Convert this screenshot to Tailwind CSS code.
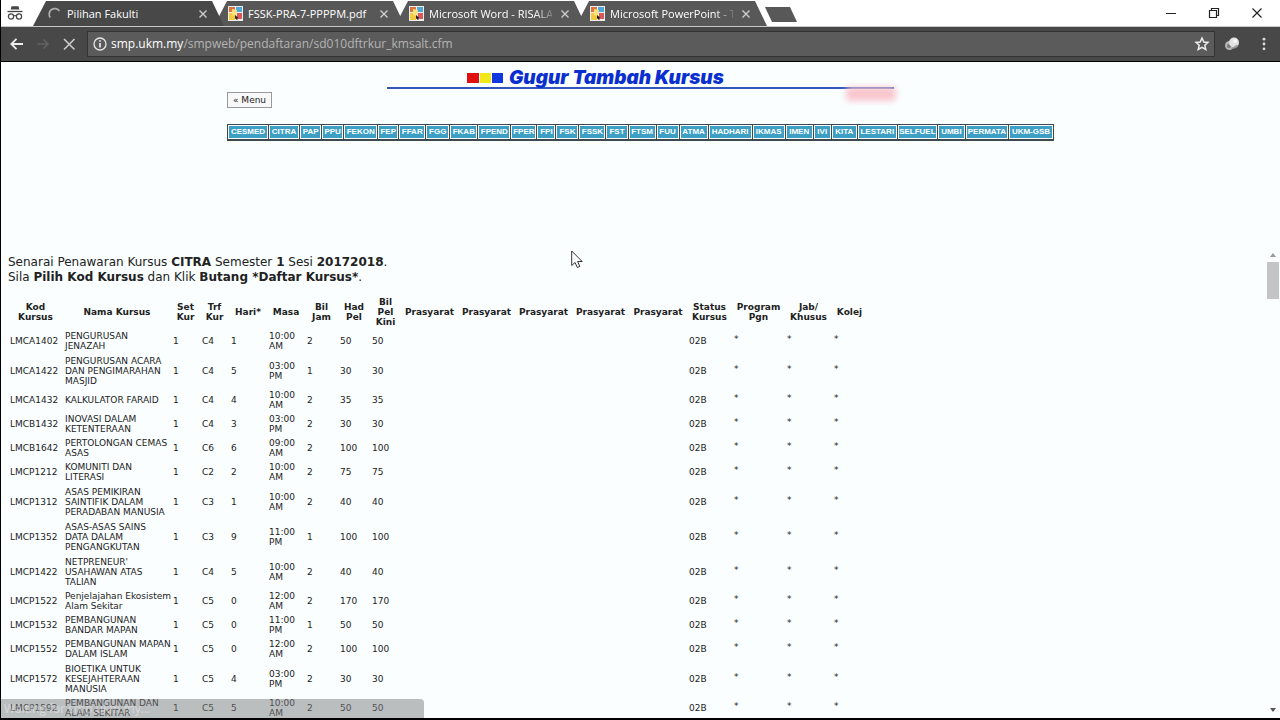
<!DOCTYPE html>
<html lang="ms">
<head>
<meta charset="utf-8">
<title>Pilihan Fakulti</title>
<script src="https://cdn.jsdelivr.net/npm/@tailwindcss/browser@4"></script>
</head>
<body class="flex h-screen flex-col overflow-hidden border-b-2 border-l border-black bg-[#fafeff] font-['DejaVu_Sans',sans-serif] text-[#222]">

<!-- Browser chrome -->
<header class="shrink-0 border-b border-black bg-[#484848] font-['Open_Sans','Noto_Sans',sans-serif] text-white">
  <div class="flex h-[27px] items-stretch border-b border-[#c8c8c8] bg-white">
    <div class="flex w-8 items-center pl-[6px]">
      <svg class="h-4 w-4 text-[#444]" viewBox="0 0 16 16" fill="none" stroke="currentColor" aria-label="Incognito"><path d="M4.5 1.2h7l.8 3.3h-8.600z" fill="currentColor" stroke="none"/><path d="M.5 6.500h15" stroke-width="1.300"/><circle cx="4" cy="11.500" r="2.600" stroke-width="1.200"/><circle cx="12" cy="11.500" r="2.600" stroke-width="1.200"/><path d="M6.600 11q1.400-1 2.800 0" stroke-width="1.200"/></svg>
    </div>
    <nav id="tabs" class="flex items-stretch pt-px"></nav>
    <button aria-label="New tab" class="-ml-0.5 mt-[7px] h-[15px] w-[32px] bg-[#585858] [clip-path:polygon(0_0,25px_0,100%_100%,7px_100%)]"></button>
    <div class="ml-auto flex items-center gap-[27px] pr-[15px] text-[#222]">
      <button aria-label="Minimize"><svg class="h-4 w-4" viewBox="0 0 16 16" stroke="currentColor"><path d="M3 8.500h10"/></svg></button>
      <button aria-label="Restore"><svg class="h-4 w-4" viewBox="0 0 16 16" fill="none" stroke="currentColor" stroke-width="1.200"><path d="M3.500 5.500h7v7h-7zM5.500 5.500v-2h7v7h-2"/></svg></button>
      <button aria-label="Close"><svg class="h-4 w-4" viewBox="0 0 16 16" stroke="currentColor" stroke-width="1.200"><path d="M3.500 3.500l9 9m0-9l-9 9"/></svg></button>
    </div>
  </div>
  <div class="flex h-[34px] items-center pr-2">
    <div class="flex w-[86px] items-center gap-[10px] pl-2">
      <button aria-label="Back"><svg class="h-4 w-4" viewBox="0 0 16 16" fill="none" stroke="#eee" stroke-width="1.800"><path d="M14 8H2.500M7.500 2.800L2.300 8l5.200 5.200"/></svg></button>
      <button aria-label="Forward"><svg class="h-4 w-4" viewBox="0 0 16 16" fill="none" stroke="#626262" stroke-width="1.600"><path d="M2.500 8H13M8.500 3.500L13 8l-4.500 4.500"/></svg></button>
      <button aria-label="Stop"><svg class="h-4 w-4" viewBox="0 0 16 16" stroke="#ccc" stroke-width="1.600"><path d="M3 3l10.500 10.500m0-10.500L3 13.500"/></svg></button>
    </div>
    <div class="flex h-[26px] flex-1 items-center border border-[#333] bg-[#5b5b5b] px-1">
      <svg class="h-4 w-4 shrink-0" viewBox="0 0 16 16" fill="none" stroke="#e8e8e8" stroke-width="1.300"><circle cx="8" cy="8" r="6"/><path d="M8 7v4.500M8 4.200v1.600" stroke-width="1.700"/></svg>
      <a href="#" class="ml-[3px] flex-1 text-[12px] leading-4 text-[#b4b4b4]"><span class="font-medium text-white">smp.ukm.my</span>/smpweb/pendaftaran/sd010dftrkur_kmsalt.cfm</a>
      <button aria-label="Bookmark"><svg class="h-4 w-4" viewBox="0 0 16 16" fill="none" stroke="#eee" stroke-width="1.500"><path d="M8 2l1.800 4 4.200.400-3.200 2.900 1 4.200L8 11.300l-3.800 2.200 1-4.200L2 6.400 6.200 6z"/></svg></button>
    </div>
    <div class="flex items-center gap-4 pl-[9px]">
      <button aria-label="Extension"><svg class="h-4 w-4" viewBox="0 0 16 16"><circle cx="5.500" cy="9.500" r="4.500" fill="#b5b5b5"/><circle cx="5" cy="10" r="2" fill="#777"/><circle cx="10" cy="6.500" r="5" fill="#e2e2e2"/><circle cx="11" cy="5" r="2" fill="#f6f6f6"/><path d="M7 12.500q5 1 7.500-3l-2-.5z" fill="#999"/></svg></button>
      <button aria-label="Menu"><svg class="h-4 w-4" viewBox="0 0 16 16" fill="#ddd"><circle cx="8" cy="3.200" r="1.400"/><circle cx="8" cy="8" r="1.400"/><circle cx="8" cy="12.800" r="1.400"/></svg></button>
    </div>
  </div>
</header>

<!-- Top frame: banner and faculty menu -->
<section class="h-[187px] shrink-0 pt-[6px]">
  <div class="relative mx-auto w-[507px] border-b-2 border-[#3355bb]">
    <div class="flex h-[19px] items-center pl-[80px]">
      <span class="flex gap-px pt-px"><i class="h-[10px] w-[12px] bg-[#e01010]"></i><i class="h-[10px] w-[11px] bg-[#f0e818]"></i><i class="h-[10px] w-[11px] bg-[#1038e0]"></i></span>
      <h1 class="ml-[6px] whitespace-nowrap font-['Inter',sans-serif] text-[19px] leading-5 font-black italic text-[#0a2fd0]">Gugur Tambah Kursus</h1>
    </div>
    <div class="absolute -right-[2px] -bottom-[14px] h-[14px] w-[50px] rounded bg-[#f9c6cd] blur-[3px]"></div>
  </div>
  <div class="mx-auto w-[827px]">
    <button class="mt-[3px] block h-[16px] border border-[#999] bg-[#f8f8f8] px-[5px] text-[9px] leading-[14px]">« Menu</button>
    <nav id="faculties" class="mt-4 flex h-[17px] border border-b-2 border-[#3c4a50] bg-[#3c4a50]"></nav>
  </div>
</section>

<!-- Lower frame: course list -->
<main class="relative flex min-h-0 flex-1 overflow-hidden">
  <div class="min-w-0 flex-1 pt-[6px] pl-[7px]">
    <p class="text-[12px] leading-[15px]">Senarai Penawaran Kursus <b>CITRA</b> Semester <b>1</b> Sesi <b>20172018</b>.<br>Sila <b>Pilih Kod Kursus</b> dan Klik <b>Butang *Daftar Kursus*</b>.</p>
    <table class="mt-[9px] w-[859px] table-fixed text-[9px] leading-[10px]">
      <colgroup id="cols"></colgroup>
      <thead><tr class="h-[35px]">
        <th>Kod<br>Kursus</th><th>Nama Kursus</th><th>Set<br>Kur</th><th>Trf<br>Kur</th><th>Hari*</th><th>Masa</th><th>Bil<br>Jam</th><th>Had<br>Pel</th><th>Bil<br>Pel<br>Kini</th><th>Prasyarat</th><th>Prasyarat</th><th>Prasyarat</th><th>Prasyarat</th><th>Prasyarat</th><th>Status<br>Kursus</th><th>Program<br>Pgn</th><th>Jab/<br>Khusus</th><th>Kolej</th>
      </tr></thead>
      <tbody id="rows"></tbody>
    </table>
  </div>
  <div class="flex w-[15px] shrink-0 flex-col items-center pt-[4px] pb-[6px]">
    <i class="h-0 w-0 border-x-[3px] border-b-4 border-x-transparent border-b-[#999]"></i>
    <i class="mt-[5px] h-[37px] w-[12px] bg-[#c4c4c4]"></i>
    <i class="mt-auto h-0 w-0 border-x-[3px] border-t-4 border-x-transparent border-t-[#555]"></i>
  </div>
  <div class="absolute bottom-0 left-0 h-[19px] w-[423px] rounded-tr bg-[#7c7e80]/50 pl-[3px] font-['Open_Sans',sans-serif] text-[12px] leading-[19px] text-white/40">Waiting for smp.ukm.my...</div>
</main>

<!-- Mouse pointer -->
<svg class="absolute top-[250px] left-[571px] h-[19px] w-[12px]" viewBox="0 0 12 19"><path d="M.7 1v14.500l3.400-3 2.200 5 2.500-1.100-2.200-4.900h4.600z" fill="#fff" stroke="#333"/></svg>

<script>
const spinner = '<svg class="h-[14px] w-[14px]" viewBox="0 0 14 14" fill="none" stroke="#aaa" stroke-width="1.800"><path d="M2.200 10.500A5.500 5.500 0 0 1 11.500 4"/></svg>';
const favicon = '<svg class="h-[15px] w-[15px]" viewBox="0 0 15 15"><path fill="#eee" d="M0 0h15v15H0z"/><path fill="#e0703c" d="M1 1h6v5H1z"/><path fill="#4fa9d8" d="M8 1h6v5H8z"/><path fill="#f3cb3e" d="M1 7h6v7H1z"/><path fill="#d9585a" d="M9 7h5v6H9z"/><path fill="#fbe27c" d="M4 3l5 1-1 6-4-1z"/><path fill="#222" d="M7 9l3.500 3-1.500.2.700 1.500-1 .4-.8-1.500L7 13z"/></svg>';
const close = '<button aria-label="Close tab" class="ml-auto"><svg class="h-[10px] w-[10px]" viewBox="0 0 10 10" stroke="#ccc" stroke-width="1.400"><path d="M1.500 1.500l7 7m0-7l-7 7"/></svg></button>';
const plain = 'ml-[5px] w-[123px] overflow-hidden whitespace-nowrap text-[11px] leading-4';
const fade = 'ml-[5px] w-[123px] overflow-hidden whitespace-nowrap text-[11px] leading-4 [mask-image:linear-gradient(90deg,#000_105px,transparent_128px)]';
const active = 'relative z-10 flex w-[191px] items-center bg-[#484848] pr-[16px] pl-[15px] [clip-path:polygon(0_100%,13px_0,calc(100%-12px)_0,100%_100%)]';
const idle = '-ml-[10px] flex w-[191px] items-center bg-[#585858] pr-[16px] pl-[14px] [clip-path:polygon(0_100%,13px_0,calc(100%-12px)_0,100%_100%)]';
document.getElementById('tabs').innerHTML = ['Pilihan Fakulti','FSSK-PRA-7-PPPPM.pdf','Microsoft Word - RISALA','Microsoft PowerPoint - TA']
  .map((t,i) => `<div class="${i ? idle : active}">${i ? favicon : spinner}<span class="${i > 1 ? fade : plain}">${t}</span>${close}</div>`).join('');

const faculties = [['CESMED',41],['CITRA',31],['PAP',22],['PPU',22],['FEKON',34],['FEP',21],['FFAR',27],['FGG',24],['FKAB',28],['FPEND',33],['FPER',26],['FPI',19],['FSK',23],['FSSK',27],['FST',22],['FTSM',28],['FUU',23],['ATMA',29],['HADHARI',44],['IKMAS',33],['IMEN',28],['IVI',18],['KITA',26],['LESTARI',40],['SELFUEL',40],['UMBI',28],['PERMATA',43],['UKM-GSB',45]];
document.getElementById('faculties').innerHTML = faculties
  .map(([n,w]) => `<a href="#" class="mr-px flex min-w-0 items-center justify-center border border-white bg-[#3d9fc4] font-['Liberation_Sans',sans-serif] text-[8px] leading-none font-bold text-white last:mr-0" style="flex:${w - 3} 1 2px">${n}</a>`).join('');

document.getElementById('cols').innerHTML = [55,108,29,29,38,38,33,32,31,57,57,57,57,58,45,53,47,35].map(w => `<col style="width:${w}px">`).join('');

const rows = [
['LMCA1402','PENGURUSAN|JENAZAH','C4',1,'10:00 AM',2,50],
['LMCA1422','PENGURUSAN ACARA|DAN PENGIMARAHAN|MASJID','C4',5,'03:00 PM',1,30],
['LMCA1432','KALKULATOR FARAID','C4',4,'10:00 AM',2,35],
['LMCB1432','INOVASI DALAM|KETENTERAAN','C4',3,'03:00 PM',2,30],
['LMCB1642','PERTOLONGAN CEMAS|ASAS','C6',6,'09:00 AM',2,100],
['LMCP1212','KOMUNITI DAN|LITERASI','C2',2,'10:00 AM',2,75],
['LMCP1312','ASAS PEMIKIRAN|SAINTIFIK DALAM|PERADABAN MANUSIA','C3',1,'10:00 AM',2,40],
['LMCP1352','ASAS-ASAS SAINS|DATA DALAM|PENGANGKUTAN','C3',9,'11:00 PM',1,100],
['LMCP1422','NETPRENEUR\'|USAHAWAN ATAS|TALIAN','C4',5,'10:00 AM',2,40],
['LMCP1522','Penjelajahan Ekosistem|Alam Sekitar','C5',0,'12:00 AM',2,170],
['LMCP1532','PEMBANGUNAN|BANDAR MAPAN','C5',0,'11:00 PM',1,50],
['LMCP1552','PEMBANGUNAN MAPAN|DALAM ISLAM','C5',0,'12:00 AM',2,100],
['LMCP1572','BIOETIKA UNTUK|KESEJAHTERAAN|MANUSIA','C5',4,'03:00 PM',2,30],
['LMCP1592','PEMBANGUNAN DAN|ALAM SEKITAR','C5',5,'10:00 AM',2,50]];
document.getElementById('rows').innerHTML = rows.map(([k,n,t,h,m,j,p]) => {
  const lines = n.split('|');
  const cells = [k, lines.join('<br>'), 1, t, h, m.replace(' ','<br>'), j, p, p, '', '', '', '', '', '02B', '*', '*', '*'];
  return `<tr class="${lines.length > 2 ? 'h-[35px]' : 'h-[24px]'}">` + cells.map(c => `<td class="${c === '*' ? 'pb-[4px] pl-[2px]' : 'pl-[2px] whitespace-nowrap'}">${c}</td>`).join('') + '</tr>';
}).join('');
</script>
</body>
</html>
